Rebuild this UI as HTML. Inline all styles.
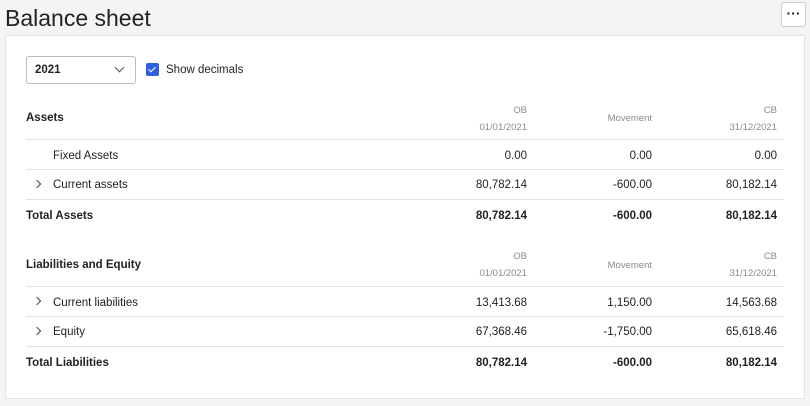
<!DOCTYPE html>
<html><head><style>
*{margin:0;padding:0;box-sizing:border-box}
body{width:810px;height:406px;background:#f3f4f6;font-family:"Liberation Sans",sans-serif;color:#222;position:relative;overflow:hidden}
.a{position:absolute;white-space:nowrap}
.t{font-size:11.5px;line-height:13px}
.r{text-align:right}
.h{color:#8a8a8a;font-size:9.5px}
.l{position:absolute;left:26px;width:758px;height:1px;background:#e2e2e2}
.b{font-weight:bold}
.chev{position:absolute;width:6px;height:6px;border-right:1.3px solid #444;border-top:1.3px solid #444;transform:rotate(45deg)}
</style></head><body>
<div class="a" style="left:5px;top:5px;font-size:23px;color:#222">Balance sheet</div>
<div class="a" style="left:781px;top:2px;width:25px;height:25px;background:#fff;border:1px solid #ccc;border-radius:3px;text-align:center;font-size:14px;line-height:20px;font-weight:bold">···</div>
<div class="a" style="left:5px;top:35px;width:800px;height:364px;background:#fff;border:1px solid #e4e4e4"></div>
<div class="a" style="left:26px;top:56px;width:110px;height:28px;border:1px solid #bbb;border-radius:3px"></div>
<div class="a t b" style="left:35px;top:64px">2021</div>
<div class="a" style="left:116px;top:64px;width:7px;height:7px;border-right:1.2px solid #555;border-bottom:1.2px solid #555;transform:rotate(45deg)"></div>
<div class="a" style="left:146px;top:63px;width:13px;height:13px;background:#2f5fe0;border-radius:2px"></div>
<div class="a" style="left:150px;top:65px;width:4px;height:7px;border-right:1.6px solid #fff;border-bottom:1.6px solid #fff;transform:rotate(45deg)"></div>
<div class="a t" style="left:166px;top:64px">Show decimals</div>

<div class="a t b" style="left:26px;top:112px">Assets</div>
<div class="a h r" style="left:427px;width:100px;top:105px">OB</div>
<div class="a h r" style="left:427px;width:100px;top:122px">01/01/2021</div>
<div class="a h r" style="left:552px;width:100px;top:113px">Movement</div>
<div class="a h r" style="left:677px;width:100px;top:105px">CB</div>
<div class="a h r" style="left:677px;width:100px;top:122px">31/12/2021</div>
<div class="l" style="top:139px"></div>
<div class="a t" style="left:53px;top:150px">Fixed Assets</div>
<div class="a t r" style="left:427px;width:100px;top:150px">0.00</div>
<div class="a t r" style="left:552px;width:100px;top:150px">0.00</div>
<div class="a t r" style="left:677px;width:100px;top:150px">0.00</div>
<div class="l" style="top:169px"></div>
<div class="chev" style="left:34px;top:181px"></div>
<div class="a t" style="left:53px;top:179px">Current assets</div>
<div class="a t r" style="left:427px;width:100px;top:179px">80,782.14</div>
<div class="a t r" style="left:552px;width:100px;top:179px">-600.00</div>
<div class="a t r" style="left:677px;width:100px;top:179px">80,182.14</div>
<div class="l" style="top:199px"></div>
<div class="a t b" style="left:26px;top:210px">Total Assets</div>
<div class="a t b r" style="left:427px;width:100px;top:210px">80,782.14</div>
<div class="a t b r" style="left:552px;width:100px;top:210px">-600.00</div>
<div class="a t b r" style="left:677px;width:100px;top:210px">80,182.14</div>

<div class="a t b" style="left:26px;top:259px">Liabilities and Equity</div>
<div class="a h r" style="left:427px;width:100px;top:251px">OB</div>
<div class="a h r" style="left:427px;width:100px;top:268px">01/01/2021</div>
<div class="a h r" style="left:552px;width:100px;top:260px">Movement</div>
<div class="a h r" style="left:677px;width:100px;top:251px">CB</div>
<div class="a h r" style="left:677px;width:100px;top:268px">31/12/2021</div>
<div class="l" style="top:286px"></div>
<div class="chev" style="left:34px;top:298px"></div>
<div class="a t" style="left:53px;top:297px">Current liabilities</div>
<div class="a t r" style="left:427px;width:100px;top:297px">13,413.68</div>
<div class="a t r" style="left:552px;width:100px;top:297px">1,150.00</div>
<div class="a t r" style="left:677px;width:100px;top:297px">14,563.68</div>
<div class="l" style="top:316px"></div>
<div class="chev" style="left:34px;top:328px"></div>
<div class="a t" style="left:53px;top:326px">Equity</div>
<div class="a t r" style="left:427px;width:100px;top:326px">67,368.46</div>
<div class="a t r" style="left:552px;width:100px;top:326px">-1,750.00</div>
<div class="a t r" style="left:677px;width:100px;top:326px">65,618.46</div>
<div class="l" style="top:346px"></div>
<div class="a t b" style="left:26px;top:357px">Total Liabilities</div>
<div class="a t b r" style="left:427px;width:100px;top:357px">80,782.14</div>
<div class="a t b r" style="left:552px;width:100px;top:357px">-600.00</div>
<div class="a t b r" style="left:677px;width:100px;top:357px">80,182.14</div>
</body></html>
